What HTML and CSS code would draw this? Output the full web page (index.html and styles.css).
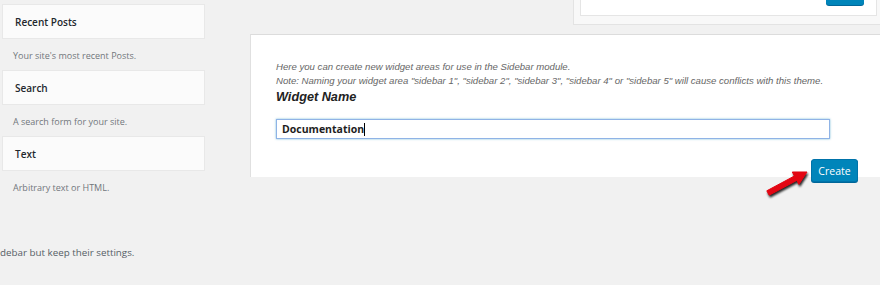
FILE: index.html
```html
<!DOCTYPE html>
<html lang="en">
<head>
    <meta charset="UTF-8">
    <title>Widgets</title>
    <link rel="stylesheet" href="styles.css">
</head>
<body>

<div class="page">
    <div class="widget-list">
        <div class="widget-card">Recent Posts</div>
        <p class="widget-desc">Your site's most recent Posts.</p>
        <div class="widget-card">Search</div>
        <p class="widget-desc">A search form for your site.</p>
        <div class="widget-card">Text</div>
        <p class="widget-desc">Arbitrary text or HTML.</p>
        <p class="inactive-note">debar but keep their settings.</p>
    </div>

    <div class="main">
        <div class="top-panel">
            <div class="top-inner">
                <span class="top-btn"></span>
            </div>
        </div>

        <div class="create-panel">
            <p class="hint">Here you can create new widget areas for use in the Sidebar module.<br>
            Note: Naming your widget area "sidebar 1", "sidebar 2", "sidebar 3", "sidebar 4" or "sidebar 5" will cause conflicts with this theme.</p>
            <h3>Widget Name</h3>
            <div class="name-field">Documentation<span class="caret"></span></div>
            <div class="actions">
                <button class="btn-create">Create</button>
            </div>
        </div>
    </div>
</div>

<!-- annotation arrow -->
<svg class="arrow" width="52" height="34" viewBox="0 0 52 34">
    <polygon points="4.8,24.8 32.4,10 30.3,6 45,6 36.9,18.4 34.8,14.4 7.2,29.2" fill="#e30613" stroke="#e30613" stroke-width="1" stroke-linejoin="round"/>
</svg>

</body>
</html>
```

FILE: styles.css
```css
body {
    margin: 0;
    background: #f1f1f1;
    font-family: 'Open Sans', sans-serif;
    color: #23282d;
}
.page {
    display: flex;
    height: 285px;
    overflow: hidden;
}
.widget-list {
    width: 203px;
    padding: 4px 0 0 2px;
    flex-shrink: 0;
}
.widget-card {
    height: 33px;
    line-height: 34px;
    padding-left: 12px;
    background: #fbfbfb;
    border: 1px solid #e8e8e8;
    font-size: 10px;
    font-weight: 600;
}
.widget-desc {
    margin: 0;
    height: 31px;
    line-height: 33px;
    padding-left: 11px;
    font-size: 9px;
    color: #72777c;
}
.inactive-note {
    margin: 44px 0 0 -2px;
    font-size: 9.8px;
    color: #555d66;
}
.main {
    flex: 1;
    margin-left: 45px;
}
.top-panel {
    margin-left: 323px;
    height: 25px;
    background: #f8f8f8;
    border-left: 1px solid #e3e3e3;
    border-bottom: 1px solid #e3e3e3;
    padding-left: 6px;
    box-sizing: border-box;
}
.top-inner {
    width: 297px;
    height: 16px;
    background: #fff;
    border: 1px solid #e5e5e5;
    border-top: none;
    box-sizing: border-box;
    position: relative;
}
.top-btn {
    position: absolute;
    right: 12px;
    top: 0;
    width: 38px;
    height: 5px;
    background: #0085ba;
    border-radius: 0 0 3px 3px;
    box-shadow: 0 1px 0 #006799;
}
.create-panel {
    margin-top: 9px;
    height: 143px;
    box-sizing: border-box;
    background: #fff;
    border-top: 1px solid #dcdcdc;
    border-left: 1px solid #e0e0e0;
    padding: 25px 22px 0 25px;
}
.hint {
    margin: 0;
    font-family: 'Liberation Sans', Arial, sans-serif;
    font-style: italic;
    font-size: 9.6px;
    line-height: 14px;
    color: #666;
}
h3 {
    margin: 1px 0 0;
    font-family: 'Liberation Sans', Arial, sans-serif;
    font-style: italic;
    font-weight: bold;
    font-size: 12.7px;
    line-height: 17px;
    color: #222;
}
.name-field {
    margin-top: 13px;
    width: 554px;
    height: 20px;
    box-sizing: border-box;
    border: 1px solid #8fb3e6;
    box-shadow: 0 0 2px rgba(30,140,190,0.6);
    padding-left: 5px;
    font-size: 10.5px;
    font-weight: 700;
    line-height: 18px;
    color: #1e1e1e;
}
.caret {
    display: inline-block;
    width: 1px;
    height: 13px;
    background: #000;
    vertical-align: -3px;
}
.actions {
    display: flex;
    justify-content: flex-end;
    margin-top: 20px;
}
.btn-create {
    width: 47px;
    height: 23px;
    padding: 0;
    background: #0085ba;
    border: 1px solid #0073aa;
    border-radius: 3px;
    box-shadow: 0 1px 0 #006799;
    color: #fff;
    font-family: 'Open Sans', sans-serif;
    font-size: 10.5px;
}
.arrow {
    position: absolute;
    left: 762px;
    top: 166px;
    filter: drop-shadow(1px 2px 1px rgba(0,0,0,0.85));
}
```
